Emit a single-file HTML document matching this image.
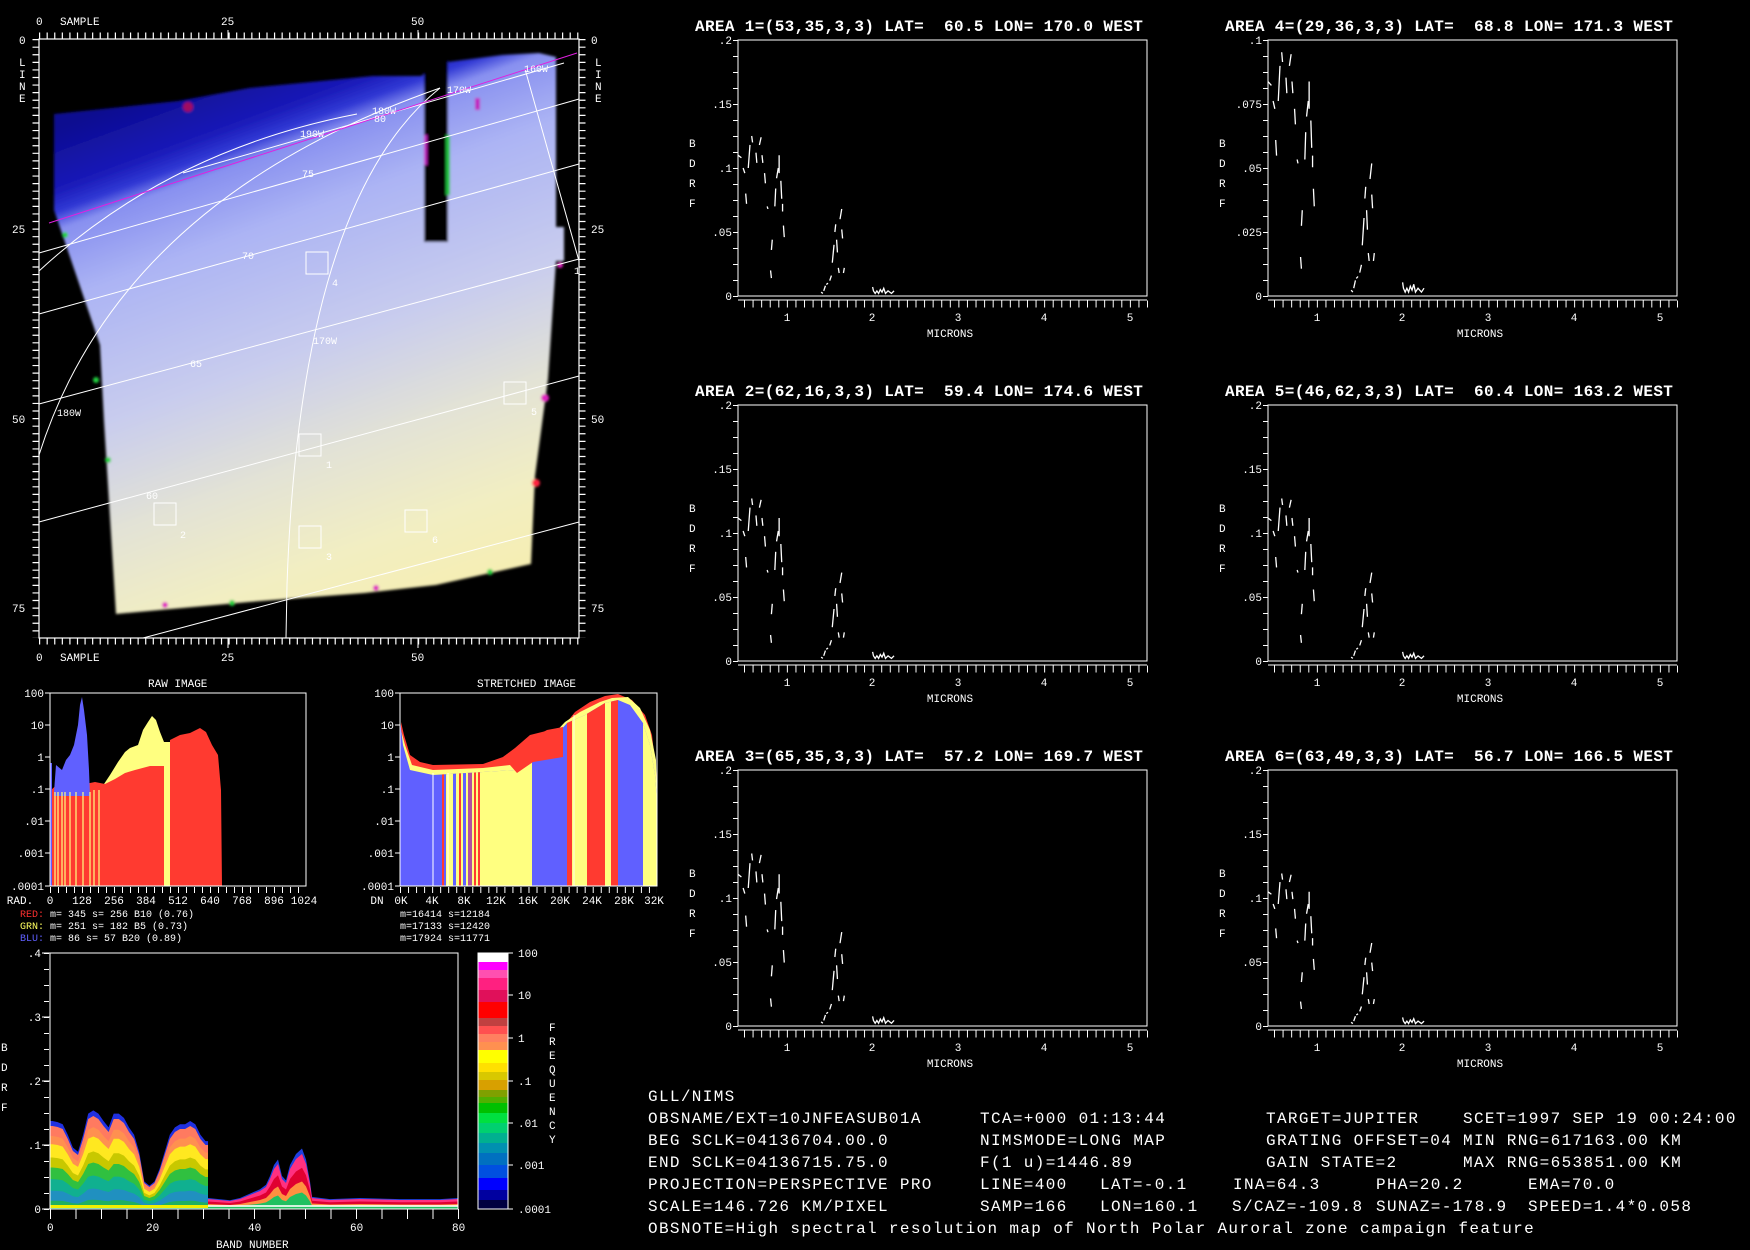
<!DOCTYPE html>
<html><head><meta charset="utf-8"><style>
html,body{margin:0;padding:0;background:#000;width:1750px;height:1250px;overflow:hidden}
svg{display:block}
.t{font-family:"Liberation Mono",monospace;fill:#fff}
.ti{font-family:"Liberation Mono",monospace;font-weight:bold;font-size:16px;letter-spacing:0.36px;fill:#fff}
.s{font-family:"Liberation Mono",monospace;font-size:11px;fill:#fff}
.xs{font-family:"Liberation Mono",monospace;font-size:10px;fill:#fff}
.b{font-family:"Liberation Mono",monospace;font-size:16px;letter-spacing:1.35px;fill:#fff}
</style></head><body>
<svg width="1750" height="1250" viewBox="0 0 1750 1250" xmlns="http://www.w3.org/2000/svg">
<defs>
<linearGradient id="img" gradientUnits="userSpaceOnUse" x1="270" y1="50" x2="470" y2="600">
<stop offset="0" stop-color="#0c0c90"/><stop offset="0.1" stop-color="#1a1ab8"/><stop offset="0.135" stop-color="#3038d4"/><stop offset="0.165" stop-color="#8890f0"/><stop offset="0.28" stop-color="#acb4f4"/><stop offset="0.5" stop-color="#c8ccee"/><stop offset="0.68" stop-color="#e2e2d6"/><stop offset="0.85" stop-color="#f2eec2"/><stop offset="1" stop-color="#f6eeb0"/>
</linearGradient>
<filter id="bl"><feGaussianBlur stdDeviation="1.2"/></filter>
<path id="spec" fill="none" stroke="#fff" stroke-width="1.3" vector-effect="non-scaling-stroke" d="M43,-110 L47,-108 M49,-100 L51,-96 M52,-80 L53,-72 M55,-100 L57,-118 M59,-125 L60,-120 M64,-112 L65,-104 M68,-118 L70,-124 M71,-110 L72,-104 M74,-96 L75,-88 M77,-70 L78,-68 M82,-36 L83,-44 M81,-20 L82,-14 M86,-70 L87,-84 M88,-92 L90,-100 M91,-110 L91,-96 M93,-90 L94,-76 M95,-72 L95,-66 M96,-55 L97,-46 M140,-3 L142,-2 M143,-4 L145,-8 M146,-9 L148,-10 M150,-12 L152,-16 M153,-26 L155,-40 M156,-50 L157,-56 M158,-44 L159,-34 M160,-22 L161,-18 M162,-60 L164,-68 M164,-52 L165,-45 M166,-18 L167,-22 M200,-7 L201,-4 L203,-2 L205,-4 L207,-2 L209,-5 L211,-3 L213,-6 L215,-2 L218,-4 L220,-3 L222,-2 L225,-4"/>
<polygon id="env" points="50,0 50,-83 52.5,-83 57.6,-82 62.7,-80 67.8,-70 72.9,-58 78,-54 83.1,-70 88.2,-90 93.3,-93 98.4,-90 103.5,-83 108.6,-77 113.7,-90 118.8,-90 123.9,-86 129,-77 134.1,-70 139.2,-54 144.3,-26 149.4,-22 154.5,-26 159.6,-38 164.7,-54 169.8,-70 174.9,-77 180,-80 185.1,-80 190.2,-83 195.3,-80 200.4,-70 205.5,-64 208,-64 208,0"/>
<polygon id="env2" points="208,0 208,-10 230,-8 240,-10 250,-14 260,-18 266,-22 270,-30 274,-40 278,-45 282,-30 286,-26 290,-40 296,-50 302,-55 306,-45 310,-25 312,-11 330,-9 360,-10 400,-9 440,-9 458,-10 458,0"/>
<clipPath id="stc"><polygon points="400,886 400,720 403,745 410,770 433,775 483,772 515,770 532,762 550,742 567,723 585,715 605,703 618,700 630,705 643,723 650,745 655,775 657,800 657,886"/></clipPath>
</defs>

<!-- ===== MAIN IMAGE ===== -->
<g filter="url(#bl)">
<polygon fill="url(#img)" points="54,114 54,210 100,345 104,421 116,614 249,602 365,593 436,585 531,564 535,476 548,379 556,261 564,261 564,227 556,227 556,57 539,53 502,55 440,63 421,76 373,76 249,88 178,101"/>
<rect x="424" y="60" width="24" height="182" fill="#000"/>
<rect x="424" y="135" width="3" height="30" fill="#c020c0"/><rect x="446" y="135" width="4" height="60" fill="#20c040"/>
<rect x="475" y="98" width="5" height="12" fill="#c020c0"/>
<circle cx="65" cy="235" r="3" fill="#20d040"/><circle cx="96" cy="380" r="3" fill="#20d040"/><circle cx="108" cy="460" r="3" fill="#20d040"/>
<circle cx="165" cy="605" r="3" fill="#e020c0"/><circle cx="232" cy="603" r="3" fill="#20d040"/><circle cx="376" cy="588" r="3" fill="#e020c0"/>
<circle cx="490" cy="572" r="3" fill="#20d040"/><circle cx="536" cy="483" r="4" fill="#ff2040"/><circle cx="545" cy="398" r="4" fill="#e020c0"/><circle cx="560" cy="265" r="3" fill="#e020c0"/>
<circle cx="188" cy="107" r="5" fill="#a01060"/>
</g>
<g stroke="#fff" stroke-width="1" fill="none">
<line x1="39" y1="253" x2="579" y2="99"/>
<line x1="39" y1="314" x2="579" y2="164"/>
<line x1="39" y1="404" x2="579" y2="259"/>
<line x1="39" y1="522" x2="579" y2="376"/>
<line x1="143" y1="638" x2="579" y2="522"/>
<line x1="183" y1="173" x2="564" y2="63"/>
<path d="M39,271 Q170,150 357,114"/>
<path d="M39,455 Q120,200 440,88"/>
<path d="M286,638 L287,585 Q300,200 440,88"/>
<line x1="525" y1="69" x2="579" y2="261"/>
<rect x="306" y="252" width="22" height="22"/><rect x="299" y="434" width="22" height="22"/><rect x="154" y="503" width="22" height="22"/>
<rect x="299" y="526" width="22" height="22"/><rect x="405" y="510" width="22" height="22"/><rect x="504" y="382" width="22" height="22"/>
</g>
<line x1="49" y1="223" x2="577" y2="53" stroke="#e020e0" stroke-width="1"/>
<g class="xs">
<text x="300" y="137">190W</text><text x="372" y="114">180W</text><text x="374" y="122">80</text><text x="447" y="93">170W</text><text x="524" y="72">160W</text>
<text x="302" y="177">75</text><text x="242" y="259">70</text><text x="190" y="367">65</text><text x="146" y="499">60</text><text x="313" y="344">170W</text><text x="57" y="416">180W</text>
<text x="574" y="274">1</text><text x="332" y="286">4</text><text x="326" y="468">1</text><text x="180" y="538">2</text><text x="326" y="560">3</text><text x="432" y="543">6</text><text x="531" y="415">5</text>
</g>
<rect x="39" y="39" width="540" height="599" fill="none" stroke="#fff" stroke-width="1.2"/>
<g stroke="#fff" fill="none">
<line x1="39" y1="35.5" x2="580" y2="35.5" stroke-width="6" stroke-dasharray="1.2 6.38"/>
<line x1="39" y1="641.5" x2="580" y2="641.5" stroke-width="6" stroke-dasharray="1.2 6.38"/>
<line x1="35.5" y1="39" x2="35.5" y2="638" stroke-width="6" stroke-dasharray="1.2 6.38"/>
<line x1="582.5" y1="39" x2="582.5" y2="638" stroke-width="6" stroke-dasharray="1.2 6.38"/>
<line x1="228" y1="30" x2="228" y2="39"/><line x1="418" y1="30" x2="418" y2="39"/>
<line x1="228" y1="638" x2="228" y2="648"/><line x1="418" y1="638" x2="418" y2="648"/>
</g>
<g class="s">
<text x="36" y="25">0</text><text x="60" y="25">SAMPLE</text><text x="221" y="25">25</text><text x="411" y="25">50</text>
<text x="36" y="661">0</text><text x="60" y="661">SAMPLE</text><text x="221" y="661">25</text><text x="411" y="661">50</text>
<text x="19" y="44">0</text><text x="12" y="233">25</text><text x="12" y="423">50</text><text x="12" y="612">75</text>
<text x="591" y="44">0</text><text x="591" y="233">25</text><text x="591" y="423">50</text><text x="591" y="612">75</text>
<text x="19" y="66">L</text><text x="19" y="78">I</text><text x="19" y="90">N</text><text x="19" y="102">E</text>
<text x="595" y="66">L</text><text x="595" y="78">I</text><text x="595" y="90">N</text><text x="595" y="102">E</text>
</g>

<!-- ===== RAW HISTOGRAM ===== -->
<text class="s" x="148" y="687">RAW IMAGE</text>
<polygon fill="#ffff80" points="100,790 110,775 118,762 125,752 130,748 138,745 143,730 148,722 152,716 156,720 160,732 164,742 164,790"/>
<rect x="164" y="742" width="6" height="144" fill="#ffff80"/>
<polygon fill="#ff3a30" points="51,886 51,790 60,782 80,785 95,782 105,784 115,779 125,773 135,770 150,766 164,766 164,886"/>
<polygon fill="#ff3a30" points="170,886 170,740 180,735 190,733 200,728 206,732 212,745 218,755 221,790 222,886"/>
<polygon fill="#6060ff" points="54,792 56,765 62,770 66,760 70,755 74,745 78,725 80,705 82,697 84,710 87,735 89,770 90,796 54,796"/>
<rect x="50" y="763" width="2" height="123" fill="#6060ff"/>
<g stroke="#ffff80" stroke-width="1.2">
<line x1="55" y1="792" x2="55" y2="886"/><line x1="58" y1="792" x2="58" y2="886"/><line x1="62" y1="792" x2="62" y2="886"/><line x1="65" y1="792" x2="65" y2="886"/><line x1="70" y1="792" x2="70" y2="886"/><line x1="76" y1="792" x2="76" y2="886"/><line x1="83" y1="792" x2="83" y2="886"/><line x1="90" y1="792" x2="90" y2="886"/><line x1="94" y1="790" x2="94" y2="886"/><line x1="99" y1="790" x2="99" y2="886"/>
</g>
<rect x="50" y="693" width="256" height="193" fill="none" stroke="#fff" stroke-width="1"/>
<g stroke="#fff">
<line x1="45" y1="693" x2="50" y2="693"/><line x1="45" y1="725" x2="50" y2="725"/><line x1="45" y1="757" x2="50" y2="757"/><line x1="45" y1="789" x2="50" y2="789"/><line x1="45" y1="821" x2="50" y2="821"/><line x1="45" y1="853" x2="50" y2="853"/><line x1="45" y1="886" x2="50" y2="886"/>
<line x1="50" y1="890" x2="306" y2="890" stroke-width="6" stroke-dasharray="1 7"/>
<line x1="400" y1="890" x2="657" y2="890" stroke-width="6" stroke-dasharray="1 7.03"/>
<line x1="395" y1="693" x2="400" y2="693"/><line x1="395" y1="725" x2="400" y2="725"/><line x1="395" y1="757" x2="400" y2="757"/><line x1="395" y1="789" x2="400" y2="789"/><line x1="395" y1="821" x2="400" y2="821"/><line x1="395" y1="853" x2="400" y2="853"/><line x1="395" y1="886" x2="400" y2="886"/>
</g>
<g class="s" text-anchor="end">
<text x="44" y="697">100</text><text x="44" y="729">10</text><text x="44" y="761">1</text><text x="44" y="793">.1</text><text x="44" y="825">.01</text><text x="44" y="857">.001</text><text x="44" y="890">.0001</text>
<text x="394" y="697">100</text><text x="394" y="729">10</text><text x="394" y="761">1</text><text x="394" y="793">.1</text><text x="394" y="825">.01</text><text x="394" y="857">.001</text><text x="394" y="890">.0001</text>
</g>
<g class="s" text-anchor="middle">
<text x="20" y="904">RAD.</text><text x="50" y="904">0</text><text x="82" y="904">128</text><text x="114" y="904">256</text><text x="146" y="904">384</text><text x="178" y="904">512</text><text x="210" y="904">640</text><text x="242" y="904">768</text><text x="274" y="904">896</text><text x="304" y="904">1024</text>
<text x="377" y="904">DN</text><text x="401" y="904">0K</text><text x="432" y="904">4K</text><text x="464" y="904">8K</text><text x="496" y="904">12K</text><text x="528" y="904">16K</text><text x="560" y="904">20K</text><text x="592" y="904">24K</text><text x="624" y="904">28K</text><text x="654" y="904">32K</text>
</g>
<g class="xs" xml:space="preserve">
<text x="20" y="917"><tspan fill="#ff3030">RED:</tspan> m=  345 s=  256 B10 (0.76)</text>
<text x="20" y="929"><tspan fill="#ffff60">GRN:</tspan> m=  251 s=  182 B5  (0.73)</text>
<text x="20" y="941"><tspan fill="#6060ff">BLU:</tspan> m=   86 s=   57 B20 (0.89)</text>
<text x="400" y="917">m=16414 s=12184</text>
<text x="400" y="929">m=17133 s=12420</text>
<text x="400" y="941">m=17924 s=11771</text>
</g>

<!-- ===== STRETCHED HISTOGRAM ===== -->
<text class="s" x="477" y="687">STRETCHED IMAGE</text>
<!-- top fringe -->
<polygon fill="#ff3a30" points="401,722 404,735 410,755 420,762 433,765 483,764 503,757 515,748 530,735 550,730 563,727 575,712 590,702 605,696 618,694 632,700 645,715 652,735 657,780 657,800 400,800"/>
<polygon fill="#ffff80" points="401,730 405,745 412,765 433,770 483,768 510,765 530,752 550,738 565,722 580,712 600,702 612,698 628,697 640,708 650,730 656,760 657,800 400,800"/>
<g clip-path="url(#stc)">
<rect x="400" y="690" width="257" height="196" fill="#6060ff"/>
<rect x="446" y="690" width="4" height="196" fill="#ffff80"/>
<rect x="450" y="690" width="33" height="196" fill="#ffff80"/>
<rect x="442" y="690" width="2" height="196" fill="#ff3a30"/>
<rect x="453" y="690" width="3" height="196" fill="#6060ff"/><rect x="459" y="690" width="2" height="196" fill="#ff3a30"/><rect x="463" y="690" width="3" height="196" fill="#6060ff"/><rect x="468" y="690" width="4" height="196" fill="#b050a0"/><rect x="474" y="690" width="2" height="196" fill="#ff3a30"/><rect x="478" y="690" width="2" height="196" fill="#ff3a30"/>
<rect x="483" y="690" width="49" height="196" fill="#ffff80"/>
<rect x="567" y="690" width="5" height="196" fill="#ff3a30"/>
<rect x="572" y="690" width="15" height="196" fill="#ffff80"/>
<rect x="587" y="690" width="18" height="196" fill="#ff3a30"/>
<rect x="605" y="690" width="6" height="196" fill="#ffff80"/>
<rect x="611" y="690" width="7" height="196" fill="#ff3a30"/>
<rect x="643" y="690" width="14" height="196" fill="#ffff80"/>
</g>
<polygon fill="#ff3a30" points="503,757 523,743 547,730 563,727 563,757 533,762 517,773"/>
<line x1="433" y1="773" x2="433" y2="886" stroke="#fff" stroke-width="1"/>
<line x1="448" y1="773" x2="448" y2="886" stroke="#fff" stroke-width="1"/>
<line x1="574" y1="715" x2="574" y2="886" stroke="#fff" stroke-width="0.8"/>
<rect x="400" y="693" width="257" height="193" fill="none" stroke="#fff" stroke-width="1"/>

<!-- ===== BDRF DENSITY ===== -->
<g transform="translate(0,1209)">
<g transform="scale(1,1.06)"><use href="#env" fill="#2030e0"/></g>
<use href="#env" fill="#ff7a60"/>
<g transform="scale(1,0.88)"><use href="#env" fill="#ff9050"/></g>
<g transform="scale(1,0.78)"><use href="#env" fill="#ffe820"/></g>
<g transform="scale(1,0.62)"><use href="#env" fill="#c8c800"/></g>
<g transform="scale(1,0.5)"><use href="#env" fill="#30c040"/></g>
<g transform="scale(1,0.36)"><use href="#env" fill="#10b090"/></g>
<g transform="scale(1,0.22)"><use href="#env" fill="#2090c0"/></g>
<g transform="scale(1,0.1)"><use href="#env" fill="#20b060"/></g>
<g transform="scale(1,1.1)"><use href="#env2" fill="#2040e0"/></g>
<use href="#env2" fill="#ff3080"/>
<g transform="scale(1,0.75)"><use href="#env2" fill="#e00030"/></g>
<g transform="scale(1,0.5)"><use href="#env2" fill="#ff9040"/></g>
<g transform="scale(1,0.3)"><use href="#env2" fill="#20c060"/></g>
</g>
<rect x="50" y="1205" width="158" height="3" fill="#f0f000"/>
<rect x="208" y="1205" width="250" height="2" fill="#ffffff" opacity="0.8"/>
<rect x="50" y="953" width="408" height="256" fill="none" stroke="#fff" stroke-width="1"/>
<g stroke="#fff">
<line x1="46.5" y1="953" x2="46.5" y2="1210" stroke-width="5" stroke-dasharray="1 15"/>
<line x1="42" y1="953" x2="50" y2="953"/><line x1="42" y1="1017" x2="50" y2="1017"/><line x1="42" y1="1081" x2="50" y2="1081"/><line x1="42" y1="1145" x2="50" y2="1145"/><line x1="42" y1="1209" x2="50" y2="1209"/>
<line x1="50" y1="1214" x2="459" y2="1214" stroke-width="10" stroke-dasharray="1 24.5"/>
<line x1="508" y1="953" x2="513" y2="953"/><line x1="508" y1="995" x2="513" y2="995"/><line x1="508" y1="1038" x2="513" y2="1038"/><line x1="508" y1="1081" x2="513" y2="1081"/><line x1="508" y1="1123" x2="513" y2="1123"/><line x1="508" y1="1165" x2="513" y2="1165"/><line x1="508" y1="1209" x2="513" y2="1209"/>
</g>
<g class="s" text-anchor="end">
<text x="41" y="957">.4</text><text x="41" y="1021">.3</text><text x="41" y="1085">.2</text><text x="41" y="1149">.1</text><text x="41" y="1213">0</text>
</g>
<g class="s">
<text x="1" y="1051">B</text><text x="1" y="1071">D</text><text x="1" y="1091">R</text><text x="1" y="1111">F</text>
<text x="47" y="1231">0</text><text x="146" y="1231">20</text><text x="248" y="1231">40</text><text x="350" y="1231">60</text><text x="452" y="1231">80</text>
<text x="216" y="1248">BAND NUMBER</text>
<text x="518" y="957">100</text><text x="518" y="999">10</text><text x="518" y="1042">1</text><text x="518" y="1085">.1</text><text x="518" y="1127">.01</text><text x="518" y="1169">.001</text><text x="518" y="1213">.0001</text>
<text x="549" y="1031">F</text><text x="549" y="1045">R</text><text x="549" y="1059">E</text><text x="549" y="1073">Q</text><text x="549" y="1087">U</text><text x="549" y="1101">E</text><text x="549" y="1115">N</text><text x="549" y="1129">C</text><text x="549" y="1143">Y</text>
</g>
<g>
<rect x="478" y="953" width="30" height="9" fill="#ffffff"/>
<rect x="478" y="962" width="30" height="8" fill="#ff00ff"/>
<rect x="478" y="970" width="30" height="8" fill="#ff50b0"/>
<rect x="478" y="978" width="30" height="12" fill="#ff2080"/>
<rect x="478" y="990" width="30" height="12" fill="#e0105a"/>
<rect x="478" y="1002" width="30" height="16" fill="#ff0000"/>
<rect x="478" y="1018" width="30" height="8" fill="#c04040"/>
<rect x="478" y="1026" width="30" height="8" fill="#ff5050"/>
<rect x="478" y="1034" width="30" height="8" fill="#ff8060"/>
<rect x="478" y="1042" width="30" height="8" fill="#ff9050"/>
<rect x="478" y="1050" width="30" height="13" fill="#ffff00"/>
<rect x="478" y="1063" width="30" height="9" fill="#ffe000"/>
<rect x="478" y="1072" width="30" height="8" fill="#d8c800"/>
<rect x="478" y="1080" width="30" height="10" fill="#d8a000"/>
<rect x="478" y="1090" width="30" height="7" fill="#80a000"/>
<rect x="478" y="1097" width="30" height="6" fill="#50b000"/>
<rect x="478" y="1103" width="30" height="10" fill="#00c000"/>
<rect x="478" y="1113" width="30" height="10" fill="#00e040"/>
<rect x="478" y="1123" width="30" height="10" fill="#00d070"/>
<rect x="478" y="1133" width="30" height="10" fill="#00b090"/>
<rect x="478" y="1143" width="30" height="10" fill="#0090b0"/>
<rect x="478" y="1153" width="30" height="12" fill="#0070c0"/>
<rect x="478" y="1165" width="30" height="13" fill="#0050e0"/>
<rect x="478" y="1178" width="30" height="12" fill="#0000ff"/>
<rect x="478" y="1190" width="30" height="10" fill="#0000a0"/>
<rect x="478" y="1200" width="30" height="9" fill="#000040"/>
<rect x="478" y="953" width="30" height="256" fill="none" stroke="#fff" stroke-width="1"/>
</g>

<!-- ===== SPECTRAL PLOTS ===== -->
<text class="ti" x="695" y="31" xml:space="preserve">AREA 1=(53,35,3,3) LAT=  60.5 LON= 170.0 WEST</text>
<text class="ti" x="695" y="396" xml:space="preserve">AREA 2=(62,16,3,3) LAT=  59.4 LON= 174.6 WEST</text>
<text class="ti" x="695" y="761" xml:space="preserve">AREA 3=(65,35,3,3) LAT=  57.2 LON= 169.7 WEST</text>
<text class="ti" x="1225" y="31" xml:space="preserve">AREA 4=(29,36,3,3) LAT=  68.8 LON= 171.3 WEST</text>
<text class="ti" x="1225" y="396" xml:space="preserve">AREA 5=(46,62,3,3) LAT=  60.4 LON= 163.2 WEST</text>
<text class="ti" x="1225" y="761" xml:space="preserve">AREA 6=(63,49,3,3) LAT=  56.7 LON= 166.5 WEST</text>

<g fill="none" stroke="#fff" stroke-width="1">
<rect x="738" y="40" width="409" height="256"/><rect x="738" y="405" width="409" height="256"/><rect x="738" y="770" width="409" height="256"/>
<rect x="1268" y="40" width="409" height="256"/><rect x="1268" y="405" width="409" height="256"/><rect x="1268" y="770" width="409" height="256"/>
</g>
<g stroke="#fff">
<line x1="735.5" y1="40" x2="735.5" y2="297" stroke-width="5" stroke-dasharray="1 15"/>
<line x1="735.5" y1="405" x2="735.5" y2="662" stroke-width="5" stroke-dasharray="1 15"/>
<line x1="735.5" y1="770" x2="735.5" y2="1027" stroke-width="5" stroke-dasharray="1 15"/>
<line x1="1265.5" y1="40" x2="1265.5" y2="297" stroke-width="5" stroke-dasharray="1 15"/>
<line x1="1265.5" y1="405" x2="1265.5" y2="662" stroke-width="5" stroke-dasharray="1 15"/>
<line x1="1265.5" y1="770" x2="1265.5" y2="1027" stroke-width="5" stroke-dasharray="1 15"/>
<line x1="744" y1="304" x2="1148" y2="304" stroke-width="7" stroke-dasharray="1 7.575"/>
<line x1="744" y1="669" x2="1148" y2="669" stroke-width="7" stroke-dasharray="1 7.575"/>
<line x1="744" y1="1034" x2="1148" y2="1034" stroke-width="7" stroke-dasharray="1 7.575"/>
<line x1="1274" y1="304" x2="1678" y2="304" stroke-width="7" stroke-dasharray="1 7.575"/>
<line x1="1274" y1="669" x2="1678" y2="669" stroke-width="7" stroke-dasharray="1 7.575"/>
<line x1="1274" y1="1034" x2="1678" y2="1034" stroke-width="7" stroke-dasharray="1 7.575"/>
<line x1="738" y1="300" x2="1147" y2="300"/><line x1="738" y1="665" x2="1147" y2="665"/><line x1="738" y1="1030" x2="1147" y2="1030"/>
<line x1="1268" y1="300" x2="1677" y2="300"/><line x1="1268" y1="665" x2="1677" y2="665"/><line x1="1268" y1="1030" x2="1677" y2="1030"/>
</g>

<g transform="translate(701.1,296) scale(0.8575,1.28)"><use href="#spec"/></g>
<g transform="translate(701.1,661) scale(0.8575,1.3)"><use href="#spec"/></g>
<g transform="translate(701.1,1026) scale(0.8575,1.38)"><use href="#spec"/></g>
<g transform="translate(1231.1,296) scale(0.8575,1.95)"><use href="#spec"/></g>
<g transform="translate(1231.1,661) scale(0.8575,1.3)"><use href="#spec"/></g>
<g transform="translate(1231.1,1026) scale(0.8575,1.22)"><use href="#spec"/></g>

<g class="s" text-anchor="end">
<text x="732" y="44">.2</text><text x="732" y="108">.15</text><text x="732" y="172">.1</text><text x="732" y="236">.05</text><text x="732" y="300">0</text>
<text x="732" y="409">.2</text><text x="732" y="473">.15</text><text x="732" y="537">.1</text><text x="732" y="601">.05</text><text x="732" y="665">0</text>
<text x="732" y="774">.2</text><text x="732" y="838">.15</text><text x="732" y="902">.1</text><text x="732" y="966">.05</text><text x="732" y="1030">0</text>
<text x="1262" y="44">.1</text><text x="1262" y="108">.075</text><text x="1262" y="172">.05</text><text x="1262" y="236">.025</text><text x="1262" y="300">0</text>
<text x="1262" y="409">.2</text><text x="1262" y="473">.15</text><text x="1262" y="537">.1</text><text x="1262" y="601">.05</text><text x="1262" y="665">0</text>
<text x="1262" y="774">.2</text><text x="1262" y="838">.15</text><text x="1262" y="902">.1</text><text x="1262" y="966">.05</text><text x="1262" y="1030">0</text>
</g>
<g class="s">
<text x="689" y="147">B</text><text x="689" y="167">D</text><text x="689" y="187">R</text><text x="689" y="207">F</text>
<text x="689" y="512">B</text><text x="689" y="532">D</text><text x="689" y="552">R</text><text x="689" y="572">F</text>
<text x="689" y="877">B</text><text x="689" y="897">D</text><text x="689" y="917">R</text><text x="689" y="937">F</text>
<text x="1219" y="147">B</text><text x="1219" y="167">D</text><text x="1219" y="187">R</text><text x="1219" y="207">F</text>
<text x="1219" y="512">B</text><text x="1219" y="532">D</text><text x="1219" y="552">R</text><text x="1219" y="572">F</text>
<text x="1219" y="877">B</text><text x="1219" y="897">D</text><text x="1219" y="917">R</text><text x="1219" y="937">F</text>
</g>
<g class="s" text-anchor="middle">
<text x="787" y="321">1</text><text x="872" y="321">2</text><text x="958" y="321">3</text><text x="1044" y="321">4</text><text x="1130" y="321">5</text><text x="950" y="337">MICRONS</text>
<text x="787" y="686">1</text><text x="872" y="686">2</text><text x="958" y="686">3</text><text x="1044" y="686">4</text><text x="1130" y="686">5</text><text x="950" y="702">MICRONS</text>
<text x="787" y="1051">1</text><text x="872" y="1051">2</text><text x="958" y="1051">3</text><text x="1044" y="1051">4</text><text x="1130" y="1051">5</text><text x="950" y="1067">MICRONS</text>
<text x="1317" y="321">1</text><text x="1402" y="321">2</text><text x="1488" y="321">3</text><text x="1574" y="321">4</text><text x="1660" y="321">5</text><text x="1480" y="337">MICRONS</text>
<text x="1317" y="686">1</text><text x="1402" y="686">2</text><text x="1488" y="686">3</text><text x="1574" y="686">4</text><text x="1660" y="686">5</text><text x="1480" y="702">MICRONS</text>
<text x="1317" y="1051">1</text><text x="1402" y="1051">2</text><text x="1488" y="1051">3</text><text x="1574" y="1051">4</text><text x="1660" y="1051">5</text><text x="1480" y="1067">MICRONS</text>
</g>

<!-- ===== TEXT BLOCK ===== -->
<g class="b">
<text x="648" y="1101">GLL/NIMS</text>
<text x="648" y="1123">OBSNAME/EXT=10JNFEASUB01A</text><text x="980" y="1123">TCA=+000 01:13:44</text><text x="1266" y="1123">TARGET=JUPITER</text><text x="1463" y="1123">SCET=1997 SEP 19 00:24:00</text>
<text x="648" y="1145">BEG SCLK=04136704.00.0</text><text x="980" y="1145">NIMSMODE=LONG MAP</text><text x="1266" y="1145">GRATING OFFSET=04</text><text x="1463" y="1145">MIN RNG=617163.00 KM</text>
<text x="648" y="1167">END SCLK=04136715.75.0</text><text x="980" y="1167">F(1 u)=1446.89</text><text x="1266" y="1167">GAIN STATE=2</text><text x="1463" y="1167">MAX RNG=653851.00 KM</text>
<text x="648" y="1189">PROJECTION=PERSPECTIVE PRO</text><text x="980" y="1189">LINE=400</text><text x="1100" y="1189">LAT=-0.1</text><text x="1233" y="1189">INA=64.3</text><text x="1376" y="1189">PHA=20.2</text><text x="1528" y="1189">EMA=70.0</text>
<text x="648" y="1211">SCALE=146.726 KM/PIXEL</text><text x="980" y="1211">SAMP=166</text><text x="1100" y="1211">LON=160.1</text><text x="1232" y="1211">S/CAZ=-109.8</text><text x="1376" y="1211">SUNAZ=-178.9</text><text x="1528" y="1211">SPEED=1.4*0.058</text>
<text x="648" y="1233">OBSNOTE=High spectral resolution map of North Polar Auroral zone campaign feature</text>
</g>
</svg>
</body></html>
